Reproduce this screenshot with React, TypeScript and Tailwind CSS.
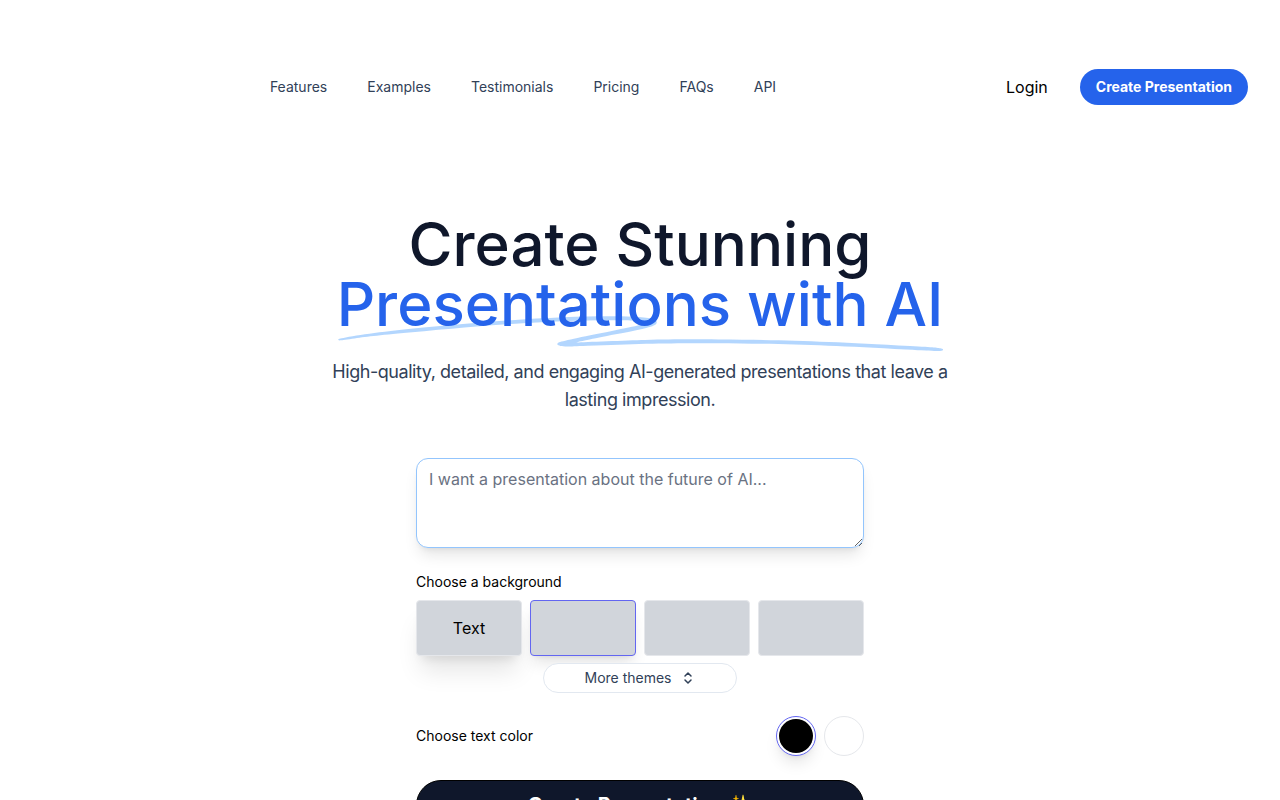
import React from 'react';

const navLinks = ['Features', 'Examples', 'Testimonials', 'Pricing', 'FAQs', 'API'];

const backgrounds = [
  { id: 'plain', label: 'Text', className: 'border-gray-200 shadow-xl' },
  { id: 'second', label: '', className: 'border-[#6366f1] shadow-lg' },
  { id: 'third', label: '', className: 'border-gray-200' },
  { id: 'fourth', label: '', className: 'border-gray-200' }
];

function Header() {
  return (
    <header className="flex items-center justify-between px-8 pt-[69px]">
      <div className="w-2" />
      <nav className="flex gap-10 text-sm text-slate-700">
        {navLinks.map((link) => (
          <a key={link} href={`#${link.toLowerCase()}`}>
            {link}
          </a>
        ))}
      </nav>
      <div className="flex items-center gap-8">
        <a href="#login">Login</a>
        <a href="#create" className="rounded-full bg-[#2563eb] px-4 py-2 text-sm font-bold text-white">
          Create Presentation
        </a>
      </div>
    </header>
  );
}

function Underline() {
  return (
    <svg
      aria-hidden="true"
      viewBox="0 0 418 42"
      className="absolute left-0 top-[42px] h-[35px] w-full fill-[#93c5fd]/70"
      preserveAspectRatio="none"
    >
      <path d="M203.371.916c-26.013-2.078-76.686 1.963-124.73 9.946L67.3 12.749C35.421 18.062 18.2 21.766 6.004 25.934 1.244 27.561.828 27.778.874 28.61c.07 1.214.828 1.121 9.595-1.176 9.072-2.377 17.15-3.92 39.246-7.496C123.565 7.986 157.869 4.492 195.942 5.046c7.461.108 19.25 1.696 19.17 2.582-.107 1.183-7.874 4.31-25.75 10.366-21.992 7.45-35.43 12.534-36.701 13.884-2.173 2.308-.202 4.407 4.442 4.734 2.654.187 3.263.157 15.593-.78 35.401-2.686 57.944-3.488 88.365-3.143 46.327.526 75.721 2.23 130.788 7.584 19.787 1.924 20.814 1.98 24.557 1.332l.066-.011c1.201-.203 1.53-1.825.399-2.335-2.911-1.31-4.893-1.604-22.048-3.261-57.509-5.556-87.871-7.36-132.059-7.842-23.239-.254-33.617-.116-50.627.674-11.629.54-42.371 2.494-46.696 2.967-2.359.259 8.133-3.625 26.504-9.81 23.239-7.825 27.934-10.149 28.304-14.005.417-4.348-3.529-6-16.878-7.066Z" />
    </svg>
  );
}

function SortIcon() {
  return (
    <svg
      aria-hidden="true"
      viewBox="0 0 16 16"
      className="size-4 fill-none stroke-current stroke-[1.5]"
      strokeLinecap="round"
      strokeLinejoin="round"
    >
      <path d="M5 6l3-3 3 3M5 10l3 3 3-3" />
    </svg>
  );
}

function Hero() {
  return (
    <section className="mt-[109px] text-center">
      <h1 className="text-6xl font-medium text-slate-900">
        Create Stunning
        <br />
        <span className="relative inline-block whitespace-nowrap text-[#2563eb]">
          <Underline />
          <span className="relative">Presentations with AI</span>
        </span>
      </h1>
      <p className="mx-auto mt-6 max-w-2xl text-lg leading-7 tracking-tight text-slate-700">
        High-quality, detailed, and engaging AI-generated presentations that leave a lasting impression.
      </p>
    </section>
  );
}

function CreateForm() {
  return (
    <form className="mx-auto mt-11 flex w-full max-w-md flex-col">
      <textarea
        aria-label="Presentation topic"
        placeholder="I want a presentation about the future of AI..."
        className="h-[90px] w-full rounded-xl border border-[#93c5fd] bg-white px-3 py-2 shadow-lg placeholder:text-gray-500"
      />

      <h2 className="mt-6 text-sm">Choose a background</h2>
      <div className="mt-2 grid grid-cols-4 gap-2">
        {backgrounds.map((bg) => (
          <button
            key={bg.id}
            type="button"
            aria-label={bg.label || bg.id}
            className={`h-14 rounded border bg-[#d1d5db] ${bg.className}`}
          >
            {bg.label}
          </button>
        ))}
      </div>
      <button
        type="button"
        className="relative mx-auto mt-[7px] flex h-[30px] w-[194px] items-center justify-center gap-2 rounded-full border border-slate-200 bg-white text-sm text-slate-700"
      >
        More themes
        <SortIcon />
      </button>

      <div className="mt-[23px] flex items-center justify-between">
        <h2 className="text-sm">Choose text color</h2>
        <div className="flex gap-2">
          <button type="button" aria-label="Black" className="size-10 rounded-full border border-[#6366f1] bg-white p-0.5 shadow-lg">
            <span className="block size-full rounded-full bg-black" />
          </button>
          <button type="button" aria-label="White" className="size-10 rounded-full border border-gray-200 bg-white" />
        </div>
      </div>

      <button type="submit" className="mt-6 h-[50px] rounded-full border border-black bg-slate-900 text-xl font-bold text-white">
        Create Presentation ✨
      </button>
    </form>
  );
}

export default function App() {
  return (
    <div className="min-h-screen bg-white pb-16 font-[Inter,sans-serif] text-black">
      <Header />
      <main className="px-8">
        <Hero />
        <CreateForm />
      </main>
    </div>
  );
}
